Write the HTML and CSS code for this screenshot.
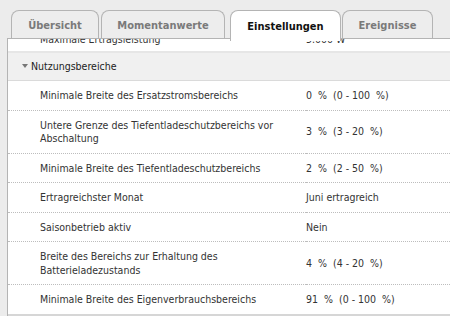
FILE: index.html
```html
<!DOCTYPE html>
<html lang="de">
<head>
    <meta charset="UTF-8">
    <title>Einstellungen</title>
    <link rel="stylesheet" href="styles.css">
</head>
<body>
    <div class="tabs">
        <div class="tab tab-1">Übersicht</div>
        <div class="tab tab-2">Momentanwerte</div>
        <div class="tab tab-3 active">Einstellungen</div>
        <div class="tab tab-4">Ereignisse</div>
    </div>
    <div class="panel">
        <div class="scroll">
            <table class="params">
                <tr class="prev-row">
                    <td class="label">Maximale Ertragsleistung</td>
                    <td class="value">5.000 W</td>
                </tr>
                <tr class="group">
                    <td colspan="2"><span class="arrow"></span>Nutzungsbereiche</td>
                </tr>
                <tr>
                    <td class="label">Minimale Breite des Ersatzstromsbereichs</td>
                    <td class="value">0  %  (0 - 100  %)</td>
                </tr>
                <tr>
                    <td class="label">Untere Grenze des Tiefentladeschutzbereichs vor Abschaltung</td>
                    <td class="value">3  %  (3 - 20  %)</td>
                </tr>
                <tr>
                    <td class="label">Minimale Breite des Tiefentladeschutzbereichs</td>
                    <td class="value">2  %  (2 - 50  %)</td>
                </tr>
                <tr>
                    <td class="label">Ertragreichster Monat</td>
                    <td class="value">Juni ertragreich</td>
                </tr>
                <tr>
                    <td class="label">Saisonbetrieb aktiv</td>
                    <td class="value">Nein</td>
                </tr>
                <tr>
                    <td class="label">Breite des Bereichs zur Erhaltung des Batterieladezustands</td>
                    <td class="value">4  %  (4 - 20  %)</td>
                </tr>
                <tr class="last">
                    <td class="label">Minimale Breite des Eigenverbrauchsbereichs</td>
                    <td class="value">91  %  (0 - 100  %)</td>
                </tr>
            </table>
        </div>
    </div>
</body>
</html>
```

FILE: styles.css
```css
body {
    margin: 0;
    background: #ececec;
    font-family: "DejaVu Sans Condensed", "DejaVu Sans", sans-serif;
    font-size: 10.5px;
    color: #333;
    height: 316px;
    overflow: hidden;
}
.tabs {
    display: flex;
    align-items: flex-end;
    height: 38px;
    padding-left: 11px;
    position: relative;
    z-index: 2;
}
.tab {
    height: 28px;
    box-sizing: border-box;
    border: 1px solid #b4b4b4;
    border-bottom: none;
    border-radius: 8px 8px 0 0;
    background: #ededed;
    color: #7a7a7a;
    font-family: "DejaVu Sans Condensed", "DejaVu Sans", sans-serif;
    font-weight: bold;
    font-size: 11px;
    display: flex;
    align-items: center;
    justify-content: center;
    padding-top: 1px;
}
.tab-1 { width: 88px; margin-right: 2px; }
.tab-2 { width: 124px; margin-right: 5px; }
.tab-3 { width: 111px; margin-right: 1px; }
.tab-4 { width: 91px; }
.tab.active {
    background: #fff;
    color: #111;
    height: 31px;
    margin-bottom: -3px;
    position: relative;
}
.panel {
    margin-left: 7px;
    border-left: 1px solid #b4b4b4;
    border-top: 1px solid #b4b4b4;
    background: #fff;
    overflow: hidden;
    position: relative;
    z-index: 1;
}
.scroll {
    margin-top: -6px;
}
.params {
    width: 100%;
    border-collapse: collapse;
}
.params td {
    padding: 8px 0 7px;
    line-height: 13.5px;
    border-bottom: 1px dotted #bdbdbd;
    vertical-align: middle;
}
.params .label {
    width: 258px;
    padding-left: 32px;
    padding-right: 8px;
}
.params .value {
    white-space: pre;
}
.params .prev-row td {
    padding: 0 0 4px;
    border-bottom: 2px solid #e6e6e6;
}
.params .prev-row .label {
    padding-left: 32px;
}
.params .group td {
    background: #f0f0f0;
    padding: 7px 0 7px 14px;
    border-bottom: 1px solid #dadada;
    color: #222;
}
.arrow {
    display: inline-block;
    width: 0;
    height: 0;
    border-left: 3px solid transparent;
    border-right: 3px solid transparent;
    border-top: 4px solid #777;
    margin-right: 3px;
    vertical-align: 2px;
}
.params .last td {
    border-bottom: 2px solid #d6d6d6;
}
```
